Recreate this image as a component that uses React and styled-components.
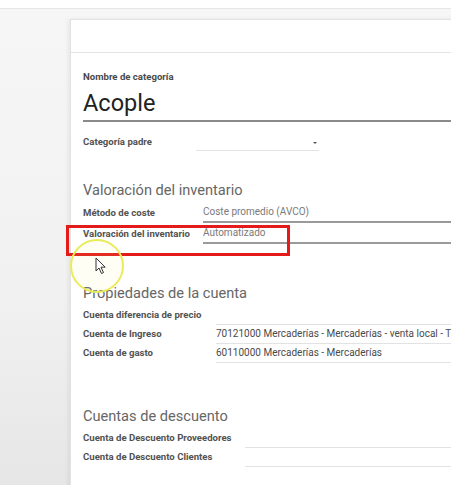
import React from 'react';
import styled, { createGlobalStyle } from 'styled-components';

const GlobalStyle = createGlobalStyle`
  html, body {
    margin: 0;
    padding: 0;
    overflow: hidden;
  }
  body {
    font-family: Roboto, "Liberation Sans", sans-serif;
  }
`;

export default function App() {
  return (
    <Page>
      <GlobalStyle />
      <TopStrip />
      <Backdrop>
        <Sheet>
          <SheetHeader />
          <SheetBody>
            <FieldLabel>Nombre de categoría</FieldLabel>
            <NameInput>Acople</NameInput>

            <Row labelWidth={113} gap={13}>
              <Label>Categoría padre</Label>
              <Select>
                <Caret />
              </Select>
            </Row>

            <Heading gap={29}>Valoración del inventario</Heading>
            <Row labelWidth={120} gap={6}>
              <Label>Método de coste</Label>
              <Value muted strong>Coste promedio (AVCO)</Value>
            </Row>
            <Row labelWidth={120} gap={3}>
              <Label>Valoración del inventario</Label>
              <Value muted strong>Automatizado</Value>
            </Row>

            <Heading gap={40}>Propiedades de la cuenta</Heading>
            <Row labelWidth={133} gap={6}>
              <Label>Cuenta diferencia de precio</Label>
              <Value />
            </Row>
            <Row labelWidth={133} gap={2}>
              <Label>Cuenta de Ingreso</Label>
              <Value>70121000 Mercaderías - Mercaderías - venta local - Terceros</Value>
            </Row>
            <Row labelWidth={133} gap={2}>
              <Label>Cuenta de gasto</Label>
              <Value>60110000 Mercaderías - Mercaderías</Value>
            </Row>

            <Heading gap={44}>Cuentas de descuento</Heading>
            <Row labelWidth={162} gap={6}>
              <Label>Cuenta de Descuento Proveedores</Label>
              <Value />
            </Row>
            <Row labelWidth={162} gap={2}>
              <Label>Cuenta de Descuento Clientes</Label>
              <Value />
            </Row>
          </SheetBody>
        </Sheet>
      </Backdrop>

      <Highlight />
      <ClickRing />
      <Cursor viewBox="0 0 12 18">
        <path
          d="M1 1 L1 14 L4 11 L6.5 16.5 L8.5 15.6 L6 10.2 L10.2 10.2 Z"
          fill="#fff"
          stroke="#333"
          strokeWidth="1"
          strokeLinejoin="round"
        />
      </Cursor>
    </Page>
  );
}

const Page = styled.div`
  position: relative;
  width: 451px;
  height: 485px;
  overflow: hidden;
  background: #fff;
`;

const TopStrip = styled.div`
  height: 8px;
  background: #fff;
  border-bottom: 1px solid #e6e6e6;
`;

const Backdrop = styled.div`
  height: 476px;
  padding: 10px 0 0 70px;
  box-sizing: border-box;
  background: linear-gradient(180deg, #f6f6f6 0%, #f1f1f1 60%, #e6e6e6 100%);
`;

const Sheet = styled.div`
  width: 420px;
  min-height: 480px;
  background: #fff;
  border: 1px solid #e2e2e2;
  border-right: none;
  box-shadow: -2px 0 4px rgba(0, 0, 0, 0.06);
`;

const SheetHeader = styled.div`
  height: 32px;
  border-bottom: 1px solid #e4e4e4;
`;

const SheetBody = styled.div`
  padding: 18px 0 0 12px;
`;

const FieldLabel = styled.div`
  font-size: 9.6px;
  font-weight: 700;
  line-height: 12px;
  color: #4a4a4a;
`;

const NameInput = styled.div`
  margin-top: 6px;
  font-size: 23.5px;
  line-height: 28px;
  color: #222;
  padding-bottom: 3px;
  border-bottom: 2px solid #8a8a8a;
`;

const Row = styled.div`
  display: grid;
  grid-template-columns: ${(p) => p.labelWidth}px 1fr;
  align-items: end;
  margin-top: ${(p) => p.gap}px;
`;

const Label = styled.div`
  font-size: 9.6px;
  font-weight: 700;
  line-height: 14px;
  padding-bottom: 3px;
  color: #525252;
  white-space: nowrap;
`;

const Value = styled.div`
  font-size: 10px;
  line-height: 14px;
  min-height: 14px;
  padding-bottom: 2px;
  white-space: nowrap;
  overflow: hidden;
  color: ${(p) => (p.muted ? '#7a7a7a' : '#4a4a4a')};
  border-bottom: ${(p) => (p.strong ? '2px solid #9a9a9a' : '1px solid #e2e2e2')};
`;

const Select = styled.div`
  position: relative;
  width: 123px;
  height: 14px;
  border-bottom: 1px solid #e4e4e4;
  margin-bottom: 1px;
`;

const Caret = styled.span`
  position: absolute;
  right: 2px;
  top: 6px;
  width: 0;
  height: 0;
  border-left: 2px solid transparent;
  border-right: 2px solid transparent;
  border-top: 2px solid #555;
`;

const Heading = styled.div`
  margin-top: ${(p) => p.gap}px;
  font-size: 14.6px;
  line-height: 18px;
  color: #666;
`;

const Highlight = styled.div`
  position: absolute;
  left: 66px;
  top: 225px;
  width: 218px;
  height: 25px;
  border: 3px solid #e31b1b;
`;

const ClickRing = styled.div`
  position: absolute;
  left: 70px;
  top: 239px;
  width: 50px;
  height: 50px;
  border-radius: 50%;
  border: 2px solid #e9eb5a;
  background: rgba(240, 240, 120, 0.08);
`;

const Cursor = styled.svg`
  position: absolute;
  left: 95px;
  top: 257px;
  width: 12px;
  height: 18px;
`;
